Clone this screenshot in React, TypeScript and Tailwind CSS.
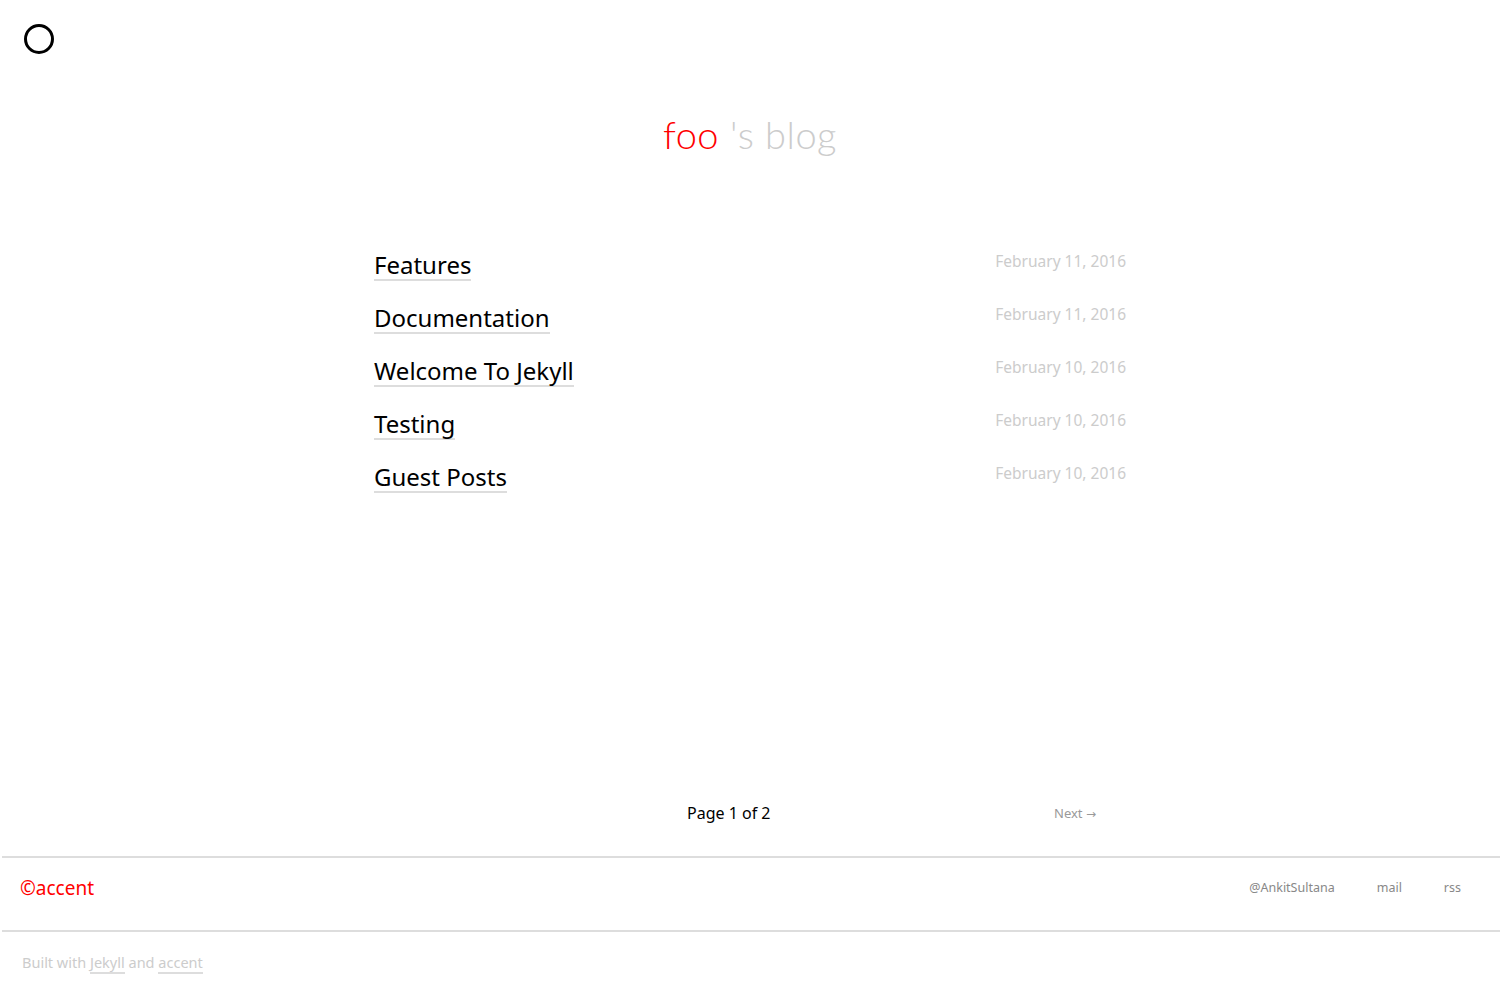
import React from 'react';

const posts = [
  { title: 'Features', date: 'February 11, 2016' },
  { title: 'Documentation', date: 'February 11, 2016' },
  { title: 'Welcome To Jekyll', date: 'February 10, 2016' },
  { title: 'Testing', date: 'February 10, 2016' },
  { title: 'Guest Posts', date: 'February 10, 2016' },
];

export default function App() {
  return (
    <div className="min-h-[1000px] bg-white flex flex-col font-['Noto_Sans',sans-serif]">
      {/* Menu toggle */}
      <div className="pl-6 pt-6">
        <div className="w-[30px] h-[30px] rounded-full border-[3px] border-black" />
      </div>

      {/* Blog title */}
      <h1 className="mt-[56px] text-center text-[38px] font-light leading-[48px] tracking-[0.5px] font-['Lato',sans-serif]">
        <span className="text-[#ff0000]">foo</span>
        <span className="text-[#cccccc]"> 's blog</span>
      </h1>

      {/* Posts */}
      <ul className="w-[752px] mx-auto mt-[92px] flex flex-col gap-[17px]">
        {posts.map((post) => (
          <li key={post.title} className="flex justify-between items-start h-[36px]">
            <a className="text-[24px] leading-[29px] text-black border-b-2 border-[#dddddd]">
              {post.title}
            </a>
            <span className="text-[15.5px] leading-[22px] text-[#cccccc]">{post.date}</span>
          </li>
        ))}
      </ul>

      {/* Pagination */}
      <div className="w-[752px] mx-auto mt-auto flex items-center h-[30px]">
        <div className="w-[313px]" />
        <span className="text-[16px] text-black">Page 1 of 2</span>
        <span className="ml-auto mr-[30px] text-[13px] text-[#999999] mt-[2px]">
          Next <span className="font-['DejaVu_Sans',sans-serif] text-[12px]">→</span>
        </span>
      </div>

      {/* Footer */}
      <footer className="mt-[28px]">
        <div className="border-t-2 border-[#dddddd] ml-[2px] h-[74px] flex items-start justify-between pt-[15px] pl-[18px] pr-[39px]">
          <span className="h-[30px] leading-[30px] text-[19px] text-[#ff0000]">©accent</span>
          <div className="h-[30px] flex items-center gap-[42px] text-[12.5px] text-[#888888]">
            <a>@AnkitSultana</a>
            <a>mail</a>
            <a>rss</a>
          </div>
        </div>
        <div className="border-t-2 border-[#dddddd] ml-[2px] h-[70px] pt-[20px] pl-[20px] text-[14.5px] leading-[20px] text-[#cccccc]">
          <span>
            Built with <a className="border-b-2 border-[#dddddd]">Jekyll</a> and{' '}
            <a className="border-b-2 border-[#dddddd]">accent</a>
          </span>
        </div>
      </footer>
    </div>
  );
}
